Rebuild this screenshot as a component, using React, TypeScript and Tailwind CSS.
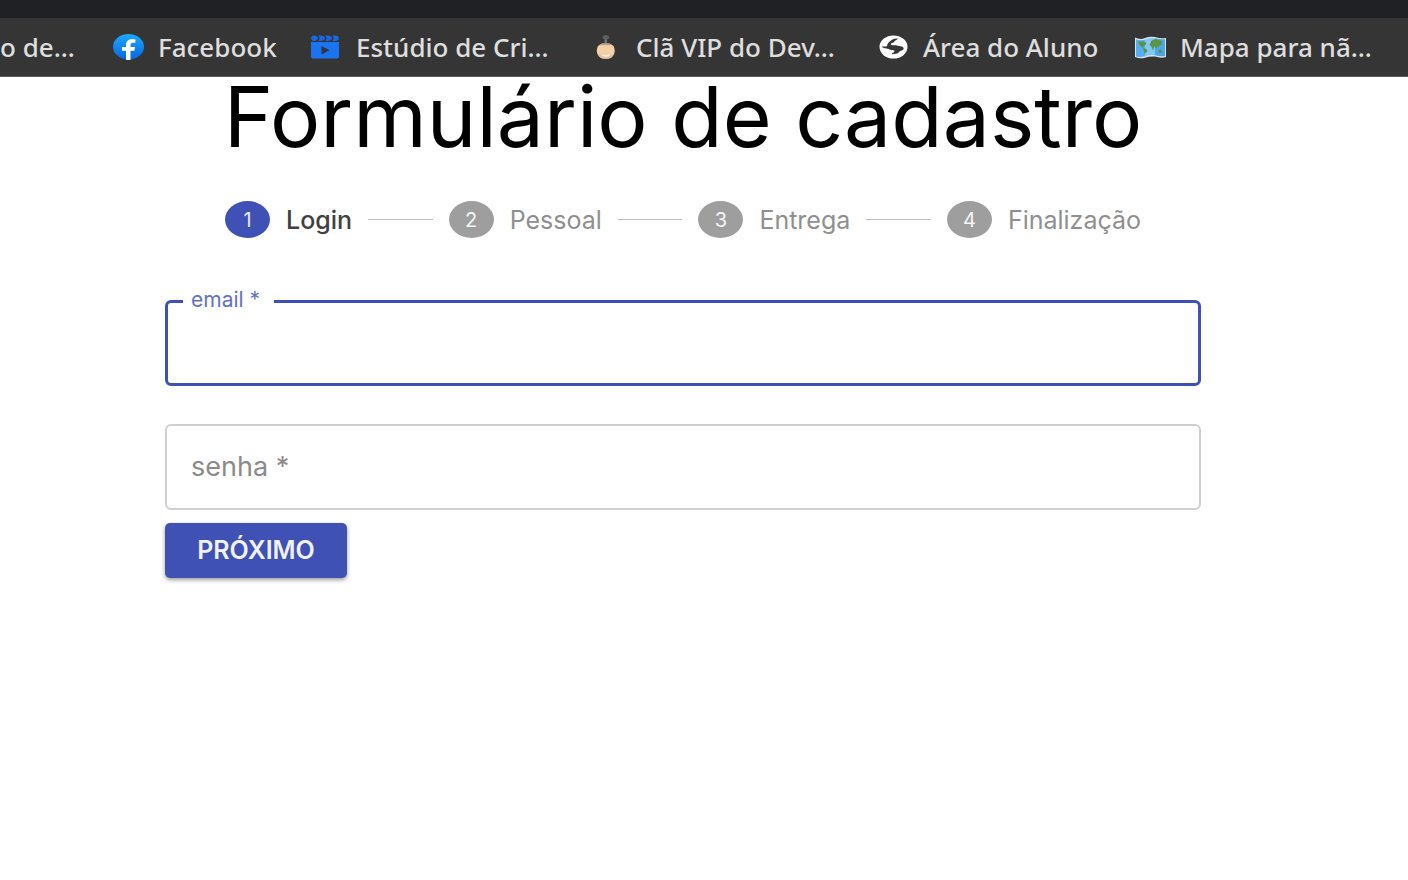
import { Fragment, type ReactNode } from "react";

function FacebookIcon() {
  return (
    <svg viewBox="0 0 31 26" className="h-[26px] w-[31px]" aria-hidden="true">
      <defs>
        <linearGradient id="fb" x1="0" y1="0" x2="0" y2="1">
          <stop offset="0" stopColor="#19aaff" />
          <stop offset="1" stopColor="#0866e0" />
        </linearGradient>
      </defs>
      <ellipse cx="15.5" cy="12.8" rx="15.5" ry="12.7" fill="url(#fb)" />
      <path
        d="M13 26v-9.300H9v-3.600h4v-2c0-3.900 2.400-5.900 6.200-5.900 1.500 0 2.600.2 3.200.3v3.200h-2.200c-2 0-2.700.9-2.700 2.200v2.200h4.600l-.8 3.600h-3.800V26z"
        fill="#fff"
      />
    </svg>
  );
}

function StudioIcon() {
  return (
    <svg viewBox="0 0 31 26" className="h-[26px] w-[31px]" aria-hidden="true">
      <path d="M0 8h28v14.500q0 2-2 2H2q-2 0-2-2z" fill="#1a73f0" />
      <path
        d="M2.500 1.500H4q3 .8 3 2.800T4 7H2.500Q0 6.500 0 4.300t2.500-2.800zM7.500 1.500H10q4 .8 4 2.800T10 7H7.500Q9.500 4.300 7.500 1.500zM14.500 1.500H17q4 .8 4 2.800T17 7h-2.500q2-2.700 0-5.500zM21.500 1.500H25q3 .8 3 2.800T25 7h-3.500q2-2.700 0-5.500z"
        fill="#1668e3"
      />
      <path d="M10.500 12v8.500l8-4.300z" fill="#303640" />
    </svg>
  );
}

function PotionIcon() {
  return (
    <svg viewBox="0 0 31 26" className="h-[26px] w-[31px]" aria-hidden="true">
      <path d="M13.500 5h2.500v5h-2.500z" fill="#747474" />
      <ellipse cx="14.800" cy="3.200" rx="3.300" ry="2.200" fill="#5d5d5d" />
      <path
        d="M7 12q1-1.500 5-2h5.500q4 .5 5 2 2.500 5 0 9-2 3.500-7.700 3.500T7 21q-2.500-4 0-9z"
        fill="#f4d0a9"
      />
      <path d="M9 10.500l2-1.200h7.500l2 1.200-1 .8H10z" fill="#b9a48e" />
      <path d="M6.500 19.500q3 2 8.300 2t8.200-2q-1.500 5.500-8.200 5.500t-8.300-5.500z" fill="#dcc3a8" />
      <path d="M11 20.500q3.800 1.500 7.500 0v1.500q-3.700 1.500-7.500 0z" fill="#fff0df" />
    </svg>
  );
}

function GlobeIcon() {
  return (
    <svg viewBox="0 0 31 26" className="h-[26px] w-[31px]" aria-hidden="true">
      <ellipse cx="15.500" cy="13" rx="14" ry="11.500" fill="#fff" />
      <path
        d="M13 6.500c2-1.500 4.500-2.500 7-1.800-1 .8-1.500 1.500-3 2-1 .4-.5 1.500-2 2-1.700.5-2.500.8-2 2 1.500.9 4 .3 6 .8 2.500.7 5.500.5 6.500 2.300.8 2-1.500 2.700-3 3.200-2 .8-1.500 2.500-4.500 2.800-1.800.2-3.500.7-4.500.5.500-1.500 2.500-1.500 3-3 .3-1.300-2-.8-3.500-1.300-2-.7-3-1.300-4.500-1.500-1.800-.3-3.500-.5-4.700-1.700 1.700-.8 3.200 0 4.700-.5 1.300-.5.300-1.500 1.300-2.800.8-1 1.700-2.200 3.200-3z"
        fill="#353535"
      />
    </svg>
  );
}

function MapIcon() {
  return (
    <svg viewBox="0 0 31 26" className="h-[26px] w-[31px]" aria-hidden="true">
      <path
        d="M0 3.500q5 2.500 10 .5t10-1q6 2 11 1v19q-5 1.500-11-.5-5-.5-10 1.200Q5 25 0 23z"
        fill="#d9e5ec"
      />
      <path d="M1 5.200q5 2 9 .3v16.800q-5 1.500-9 .2z" fill="#54aef2" />
      <path d="M10 5.500q5-1.800 10-1.300v17q-5-.4-10 1.100z" fill="#80c9f7" />
      <path d="M20 4.200q5 1.600 10 1v16.800q-5 .7-10-.8z" fill="#4ba6ed" />
      <path
        d="M3 8q4-1.500 8 .5 1 2-1.500 3L8 14l-3.500-3zM8 14q4.500 .5 4.300 3.300L9.500 20zM14.500 11l2-4.500 4-1.500 6.500 2-.5 4-3.500 1.500-1.500 2-2-2-1.500 4-1.500-3.500zM23 16.500l3.500-1 .5 3-3 .5z"
        fill="#5b9648"
      />
    </svg>
  );
}

type Bookmark = { label: string; icon: ReactNode; width: string };

const bookmarks: Bookmark[] = [
  { label: "Facebook", icon: <FacebookIcon />, width: "w-[121px]" },
  { label: "Estúdio de Cri…", icon: <StudioIcon />, width: "w-[203px]" },
  { label: "Clã VIP do Dev…", icon: <PotionIcon />, width: "w-[210px]" },
  { label: "Área do Aluno", icon: <GlobeIcon />, width: "w-[180px]" },
  { label: "Mapa para nã…", icon: <MapIcon />, width: "w-[200px]" },
];

const steps = ["Login", "Pessoal", "Entrega", "Finalização"];

export default function App() {
  return (
    <div className="min-h-screen bg-white font-['Inter',sans-serif]">
      <div className="h-[18px] bg-[#202124]" />
      <nav
        aria-label="Favoritos"
        className="flex h-[59px] items-center gap-8 overflow-hidden border-b border-[#5a5a5a] bg-[#353535] font-['Noto_Sans',sans-serif] text-[26px] font-medium whitespace-nowrap text-[#dedede]"
      >
        <a href="#curso" className="w-[81px] shrink-0">
          o de…
        </a>
        {bookmarks.map((b) => (
          <a key={b.label} href="#favorito" className="flex shrink-0 items-center gap-[14px]">
            {b.icon}
            <span className={b.width}>{b.label}</span>
          </a>
        ))}
      </nav>

      <main className="pr-[207px] pl-[165px]">
        <h1 className="text-center text-[84px] leading-[80px] whitespace-nowrap text-black">
          Formulário de cadastro
        </h1>

        <ol className="mt-11 flex items-center gap-4 px-[60px] text-[25px] leading-8">
          {steps.map((step, i) => (
            <Fragment key={step}>
              {i > 0 && <li aria-hidden="true" className="h-px flex-1 bg-[#bdbdbd]" />}
              <li
                aria-current={i === 0 ? "step" : undefined}
                className={
                  i === 0
                    ? "flex items-center gap-4 font-medium text-[#404040]"
                    : "flex items-center gap-4 text-[#8f8f8f]"
                }
              >
                <span
                  className={
                    i === 0
                      ? "flex h-[37px] w-[45px] items-center justify-center rounded-[50%] bg-[#3f51b5] text-[20px] font-normal text-[#e8eaf6]"
                      : "flex h-[37px] w-[45px] items-center justify-center rounded-[50%] bg-[#9e9e9e] text-[20px] text-[#f5f5f5]"
                  }
                >
                  {i + 1}
                </span>
                {step}
              </li>
            </Fragment>
          ))}
        </ol>

        <form className="mt-[62px]" onSubmit={(e) => e.preventDefault()}>
          <div className="relative">
            <input
              id="email"
              type="email"
              required
              className="block h-[86px] w-full rounded-md border-[3px] border-[#3f51b5] px-6 text-2xl outline-none"
            />
            <label
              htmlFor="email"
              className="absolute -top-3 left-[18px] w-[91px] bg-white pl-2 text-[21px] leading-6 text-[#6572c4]"
            >
              email *
            </label>
          </div>
          <div className="relative mt-[38px]">
            <input
              id="senha"
              type="password"
              required
              className="block h-[86px] w-full rounded-md border-2 border-[#d0d0d0] px-6 text-2xl outline-none"
            />
            <label
              htmlFor="senha"
              className="pointer-events-none absolute inset-y-0 left-[26px] flex items-center text-[27px] text-[#8a8a8a]"
            >
              senha *
            </label>
          </div>
          <button
            type="submit"
            className="mt-[13px] h-[55px] w-[182px] rounded-[5px] bg-[#3f51b5] text-[25px] font-semibold text-[#f0f1fa] shadow-[0_2px_4px_rgba(0,0,0,0.4)]"
          >
            PRÓXIMO
          </button>
        </form>
      </main>
    </div>
  );
}
